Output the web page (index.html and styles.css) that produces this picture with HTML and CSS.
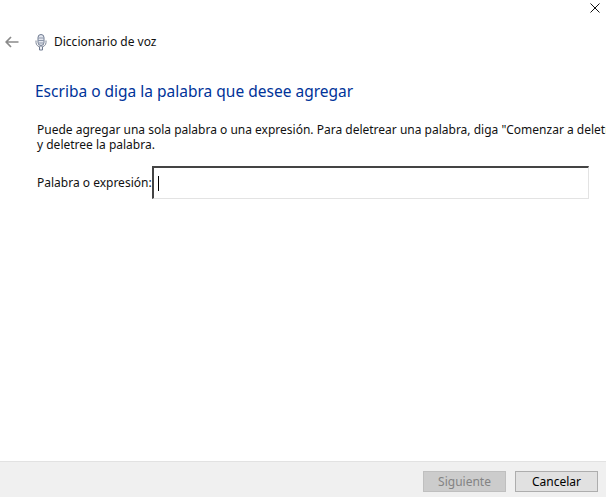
FILE: index.html
```html
<!DOCTYPE html>
<html lang="es">
<head>
<meta charset="utf-8">
<title>Diccionario de voz</title>
<link rel="stylesheet" href="styles.css">
</head>
<body>
<div class="window">
  <div class="topbar">
    <svg class="close" width="10" height="10" viewBox="0 0 10 10"><path d="M.5.5l9 9M9.5.5l-9 9" stroke="#111" stroke-width="1" fill="none"/></svg>
  </div>
  <header class="nav">
    <svg class="back" width="14" height="12" viewBox="0 0 14 12"><path d="M6 1L1.2 6 6 11M1.5 6H13.5" stroke="#8a8a8a" stroke-width="1.7" fill="none"/></svg>
    <svg class="mic" width="12" height="17" viewBox="0 0 12 17"><rect x="3" y="0.5" width="6" height="11" rx="3" fill="#e4e7ef" stroke="#6f7a90"/><path d="M3 4h6M3 6.500h6M3 9h6" stroke="#8d97aa"/><path d="M1 6.500v2a5 4.500 0 0 0 10 0v-2" fill="none" stroke="#7d8698"/><path d="M4.500 13v3h3v-3" fill="#eef0f5" stroke="#6f7a90"/></svg>
    <span class="nav-title">Diccionario de voz</span>
  </header>
  <main class="content">
    <h1 class="heading">Escriba o diga la palabra que desee agregar</h1>
    <p class="intro">Puede agregar una sola palabra o una expresión. Para deletrear una palabra, diga "Comenzar a deletrear"<br>y deletree la palabra.</p>
    <div class="field">
      <label class="field-label">Palabra o expresión:</label>
      <div class="input"><span class="caret"></span></div>
    </div>
  </main>
  <footer class="footer">
    <button class="btn btn-disabled" type="button">Siguiente</button>
    <button class="btn" type="button">Cancelar</button>
  </footer>
</div>
</body>
</html>
```
FILE: styles.css
```css
* { box-sizing: border-box; }
html, body { margin: 0; height: 100%; background: #fff; }
body { font-family: "Noto Sans", "Open Sans", sans-serif; font-size: 12px; color: #111; overflow: hidden; }
.window { height: 497px; width: 606px; display: flex; flex-direction: column; }
.topbar { height: 32px; display: flex; justify-content: flex-end; padding: 3px 6px 0 0; }
.close { display: block; }
.nav { height: 20px; display: flex; align-items: center; padding-left: 5px; }
.mic { margin-left: 16px; }
.nav-title { margin-left: 7px; line-height: 20px; }
.content { flex: 1; padding: 0 17px 0 36px; }
.heading { margin: 27px 0 0 -1px; font-size: 15.5px; font-weight: 400; line-height: 24px; color: #003399; }
.intro { margin: 19px 0 0 1px; line-height: 15px; white-space: nowrap; }
.field { margin-top: 14px; display: flex; align-items: center; margin-left: 1px; }
.field-label { width: 115px; }
.input { width: 437px; height: 33px; border: 1px solid #e3e3e3; border-top: 2px solid #444; border-left: 2px solid #444; display: flex; align-items: center; padding-left: 4px; }
.caret { width: 1px; height: 15px; background: #000; }
.footer { height: 36px; background: #f0f0f0; border-top: 1px solid #e2e2e2; display: flex; justify-content: flex-end; gap: 9px; padding: 9px 8px 0 0; }
.btn { width: 83px; height: 21px; padding: 0; font: inherit; background: #e1e1e1; border: 1px solid #adadad; color: #000; border-radius: 0; }
.btn-disabled { background: #cccccc; border-color: #bfbfbf; color: #838383; }
```
